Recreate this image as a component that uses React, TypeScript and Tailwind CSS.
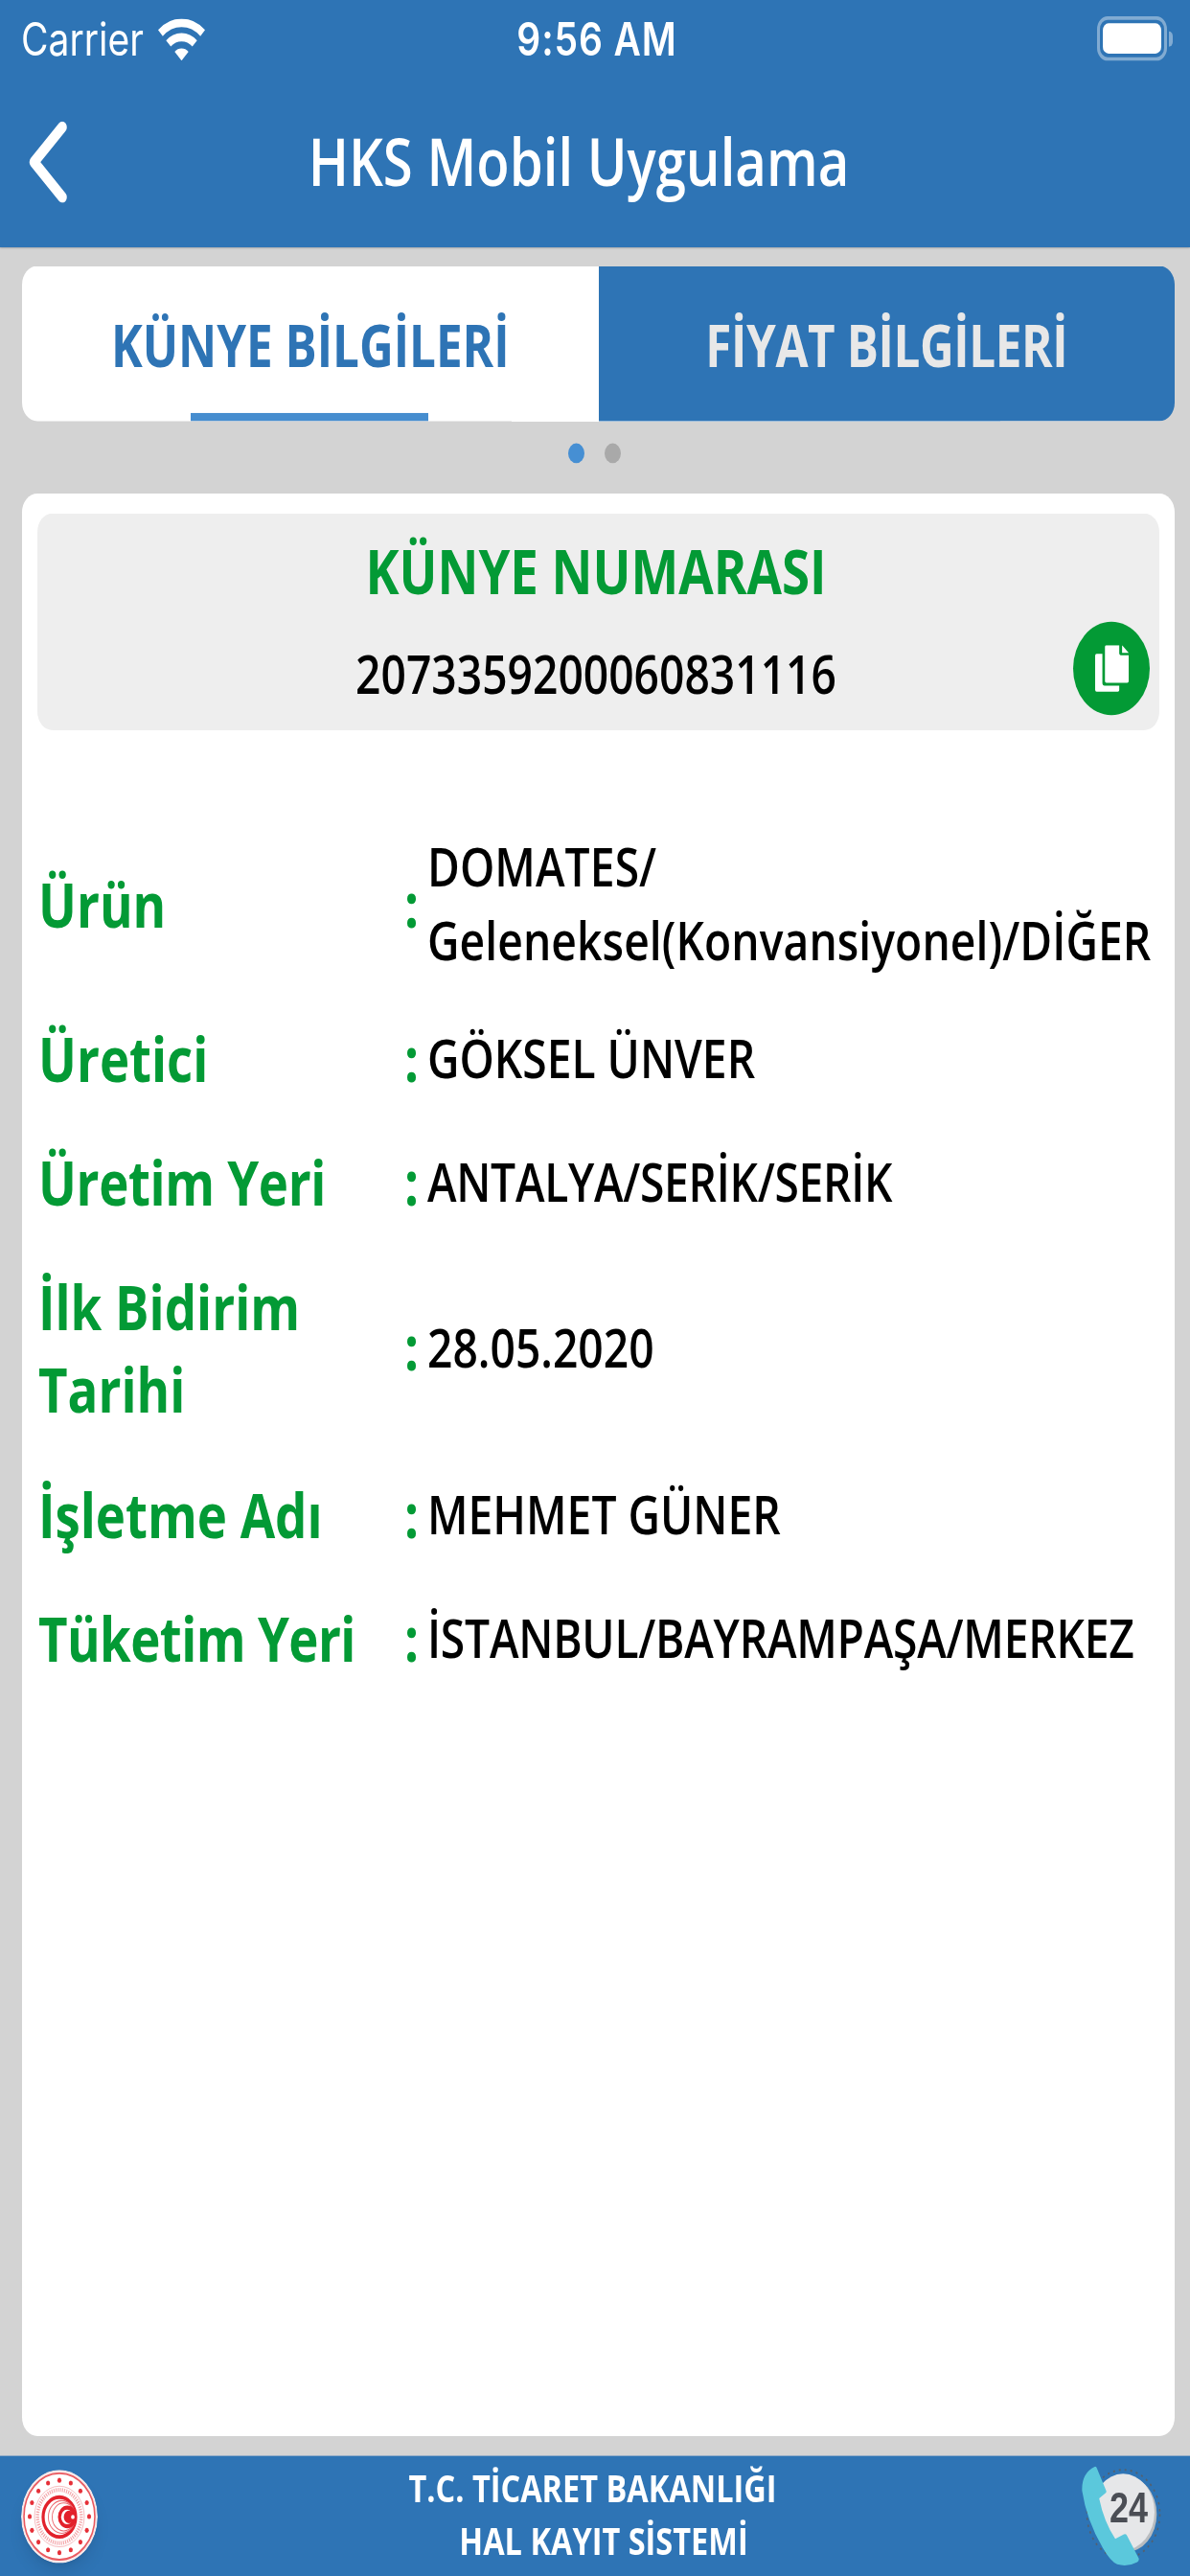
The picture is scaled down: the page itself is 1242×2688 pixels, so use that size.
import { useState } from 'react'

type InfoRow = {
  label: string
  value: string[]
  height: string
  labelTracking?: string
  valueTracking?: string
}

const rows: InfoRow[] = [
  {
    label: 'Ürün',
    value: ['DOMATES/', 'Geleneksel(Konvansiyonel)/DİĞER'],
    height: 'h-[158px]',
    valueTracking: 'tracking-[0.08px]'
  },
  { label: 'Üretici', value: ['GÖKSEL ÜNVER'], height: 'h-[106px]' },
  {
    label: 'Üretim Yeri',
    value: ['ANTALYA/SERİK/SERİK'],
    height: 'h-[106px]',
    labelTracking: 'tracking-[-0.35px]',
    valueTracking: 'tracking-[-0.3px]'
  },
  { label: 'İlk Bidirim Tarihi', value: ['28.05.2020'], height: 'h-[179px]' },
  { label: 'İşletme Adı', value: ['MEHMET GÜNER'], height: 'h-[106px]' },
  {
    label: 'Tüketim Yeri',
    value: ['İSTANBUL/BAYRAMPAŞA/MERKEZ'],
    height: 'h-[106px]',
    labelTracking: 'tracking-[-0.6px]',
    valueTracking: 'tracking-[-0.23px]'
  }
]

const tabs = ['KÜNYE BİLGİLERİ', 'FİYAT BİLGİLERİ']

function WifiIcon() {
  return (
    <svg className="w-[49px] h-9" viewBox="0 0 49 36" fill="none">
      <path d="M2.4 12.3A32.4 32.4 0 0 1 46.6 12.3" stroke="white" strokeWidth="7.2" />
      <path d="M10.8 21.3A20.1 20.1 0 0 1 38.2 21.3" stroke="white" strokeWidth="7.2" />
      <path d="M24.5 36L17.3 28.3A10.5 10.5 0 0 1 31.7 28.3Z" fill="white" />
    </svg>
  )
}

function BatteryIcon() {
  return (
    <div className="flex items-center gap-[2px]">
      <div className="w-[73px] h-[38px] p-[3px] rounded-[11px] border-[3px] border-white/40">
        <div className="h-full rounded-[6px] bg-white" />
      </div>
      <div className="w-1 h-[13px] rounded-r-full bg-white/40" />
    </div>
  )
}

function CopyIcon() {
  return (
    <svg className="w-[35px] h-10" viewBox="0 0 35.2 40" fill="white">
      <path d="M1.6 7.4H7.6V32.4Q7.6 34.9 10 34.9H25.3V38.6Q25.3 40 23.8 40H1.6Q0 40 0 38.4V9Q0 7.4 1.6 7.4Z" />
      <path d="M11.6 0H25.3V7Q25.3 8.5 26.8 8.5H35.2V30.8Q35.2 32.3 33.7 32.3H11.8Q10.3 32.3 10.3 30.8V1.4Q10.3 0 11.6 0Z" />
      <path d="M28.3 0L35.2 6.6H28.3Z" />
    </svg>
  )
}

function MinistryLogo() {
  const stars = Array.from({ length: 16 }, (_, i) => (i * Math.PI) / 8)
  return (
    <svg className="w-20 h-20 rounded-full shadow-lg" viewBox="0 0 80 80" fill="none">
      <circle cx="40" cy="40" r="40" fill="#f7e9ea" />
      <circle cx="40" cy="40" r="37" fill="white" stroke="#ea5a60" strokeWidth="1.6" />
      {stars.map(a => (
        <circle key={a} cx={40 + 31 * Math.cos(a)} cy={40 + 31 * Math.sin(a)} r="2.1" fill="#e63038" />
      ))}
      <circle cx="40" cy="40" r="26" stroke="#f5b5b8" strokeWidth="0.8" />
      <circle cx="40" cy="40" r="22.8" stroke="#f3a5a9" strokeWidth="3.4" strokeDasharray="1.1 1.1" />
      <circle cx="40" cy="40.4" r="17" stroke="#e2212b" strokeWidth="3.2" />
      <circle cx="42.5" cy="40.4" r="14" stroke="#ec6a70" strokeWidth="0.9" />
      <circle cx="44.5" cy="40.4" r="12" stroke="#ec6a70" strokeWidth="0.9" />
      <circle cx="48.3" cy="40.4" r="9.8" fill="#e2212b" />
      <circle cx="48" cy="40.4" r="6.2" fill="white" />
      <circle cx="50" cy="40.4" r="5.4" fill="#e2212b" />
      <circle cx="54" cy="40.4" r="1.8" fill="white" />
    </svg>
  )
}

function CallCenterIcon() {
  return (
    <svg className="w-[83px] h-[85px]" viewBox="0 0 83 85">
      <circle cx="43.5" cy="41" r="38" fill="none" stroke="#53606f" strokeWidth="1.6" strokeDasharray="2 4" />
      <circle cx="45.5" cy="41" r="32.8" fill="#b9bcbf" />
      <circle cx="43.2" cy="39.2" r="32.8" fill="#e6e7e9" />
      <text
        x="49"
        y="48.2"
        fontSize="36"
        textAnchor="middle"
        fill="#4b4e55"
        className="font-bold font-['Liberation_Sans',sans-serif]"
      >
        24
      </text>
      <path
        d="M13.5 0.3Q15 -0.4 15.8 1.5L25.6 21Q26 22.5 24.5 23.2L18.2 27.4Q23 47 35 62.2L44 58.2Q46 57.5 47.2 59.2L59.6 79Q60 81 58 82Q48 86.5 37 84Q30 81.5 22 70Q5 46 0.4 21Q-0.5 6 13.5 0.3Z"
        fill="#5bc8dc"
      />
    </svg>
  )
}

export default function App() {
  const [activeTab, setActiveTab] = useState(0)

  return (
    <div className="w-[1242px] h-[2688px] overflow-hidden bg-[#d3d3d3]">
      {/* 414x736pt screen, stretched to the full window height */}
      <div className="w-[1242px] h-[2208px] origin-top scale-y-[1.217391] flex flex-col font-['Open_Sans',sans-serif]">
        <header className="h-[212px] shrink-0 bg-[#2e74b5] text-white shadow-[0_1px_2px_rgba(0,0,0,0.35)]">
          <div className="h-[60px] pt-2 pl-[22px] pr-[18px] grid grid-cols-3 items-center font-['Inter',sans-serif] text-[39px] leading-[52px]">
            <div className="flex items-center gap-[15px]">
              <span>Carrier</span>
              <WifiIcon />
            </div>
            <span className="text-center font-semibold tracking-[0.9px]">9:56 AM</span>
            <div className="flex justify-end -mt-[2px]">
              <BatteryIcon />
            </div>
          </div>
          <div className="h-[152px] pl-[30px] pr-[104px] pt-[2px] flex items-center">
            <button className="shrink-0">
              <svg className="w-10 h-[70px] mt-[4px]" viewBox="0 0 40 70" fill="none">
                <path d="M35 5L5.500 35L35 65" stroke="white" strokeWidth="9.6" strokeLinecap="round" strokeLinejoin="round" />
              </svg>
            </button>
            <h1 className="flex-1 text-center text-[56.3px] font-semibold">HKS Mobil Uygulama</h1>
          </div>
        </header>

        <main className="flex-1 pt-4 pl-[23px] pr-4 pb-[17px] flex flex-col">
          <div className="h-[133px] shrink-0 flex rounded-[16px] overflow-hidden">
            {tabs.map((tab, i) => (
              <button
                key={tab}
                onClick={() => setActiveTab(i)}
                className={
                  i === activeTab
                    ? 'flex-1 relative pt-[3px] bg-white text-[#2e74b5] text-[49.4px] font-bold'
                    : 'flex-1 relative pt-[3px] bg-[#2e74b5] text-[#e8e8e8] text-[49.4px] font-bold tracking-[-0.4px]'
                }
              >
                {tab}
                {i === activeTab && (
                  <span className="absolute left-[176px] bottom-0 w-[248px] h-[7px] bg-[#468dcf]" />
                )}
              </button>
            ))}
          </div>

          <div className="h-[62px] shrink-0 pt-[19px] pr-[9px] flex justify-center gap-[21px]">
            {tabs.map((tab, i) => (
              <span
                key={tab}
                className={i === activeTab ? 'size-[17px] rounded-full bg-[#468fd3]' : 'size-[17px] rounded-full bg-[#a9a9a9]'}
              />
            ))}
          </div>

          <section className="flex-1 rounded-[16px] bg-white px-4 pt-[17px]">
            <div className="relative h-[186px] pt-[13px] pr-[5px] rounded-[16px] bg-[#eeeeee] text-center">
              <h2 className="text-[52.8px] leading-[72px] font-bold text-[#039a35]">KÜNYE NUMARASI</h2>
              <p className="mt-[21px] text-[46.2px] leading-[63px] font-semibold text-black">2073359200060831116</p>
              <button className="absolute right-[10px] bottom-[13px] size-20 rounded-full bg-[#039a35] flex items-center justify-center">
                <CopyIcon />
              </button>
            </div>

            <dl className="mt-[69px] pl-px">
              {rows.map(row => (
                <div key={row.label} className={`flex items-center ${row.height}`}>
                  <dt
                    className={`w-[382px] pr-[30px] shrink-0 text-[52.8px] leading-[71px] font-bold text-[#039a35] ${row.labelTracking ?? ''}`}
                  >
                    {row.label}
                  </dt>
                  <span className="w-6 shrink-0 text-[52.8px] leading-[71px] font-bold text-[#039a35]">:</span>
                  <dd
                    className={`text-[46.2px] leading-[63px] font-semibold text-black whitespace-nowrap ${row.valueTracking ?? ''}`}
                  >
                    {row.value.map(line => (
                      <div key={line}>{line}</div>
                    ))}
                  </dd>
                </div>
              ))}
            </dl>
          </section>
        </main>

        <footer className="h-[103px] shrink-0 pl-[22px] pr-[30px] flex items-center justify-between bg-[#2e74b5] text-white">
          <MinistryLogo />
          <div className="-mt-1 pl-[6px] text-[32.5px] leading-[45px] font-bold text-center">
            <p>T.C. TİCARET BAKANLIĞI</p>
            <p className="pl-[23px]">HAL KAYIT SİSTEMİ</p>
          </div>
          <CallCenterIcon />
        </footer>
      </div>
    </div>
  )
}
